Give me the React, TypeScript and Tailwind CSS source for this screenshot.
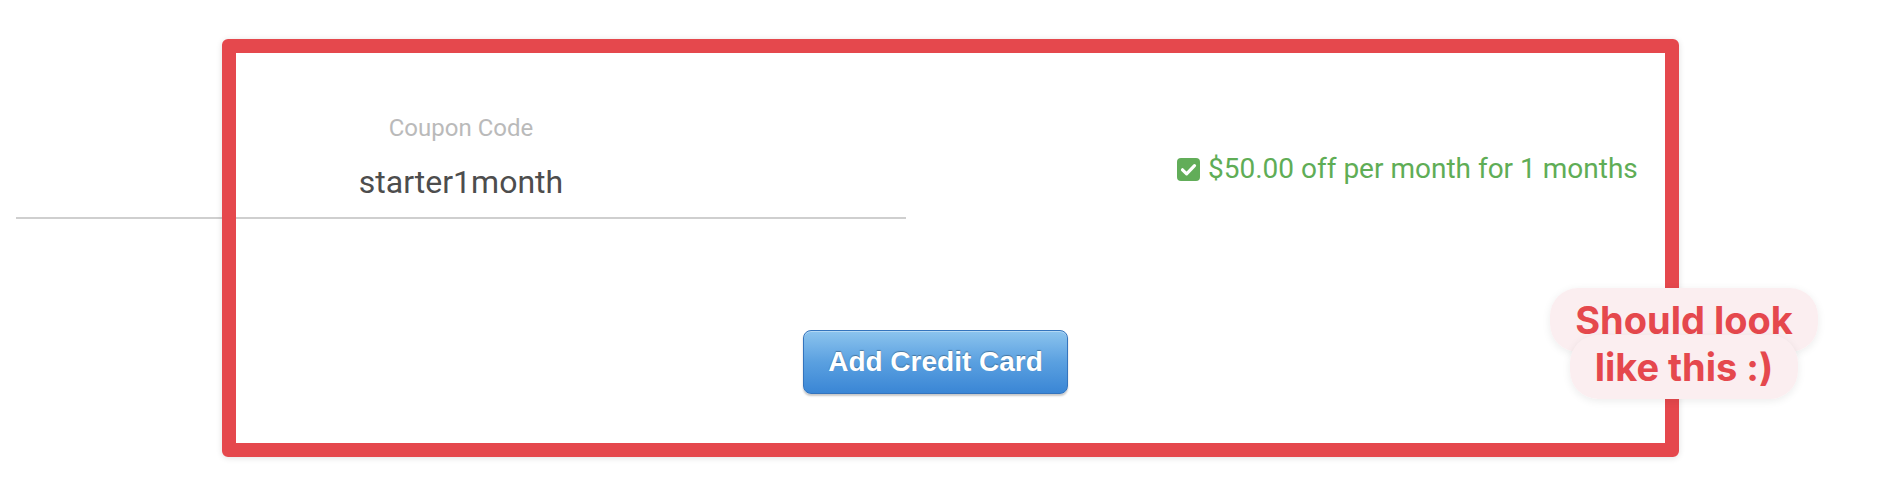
import React from 'react';

const CheckSquare: React.FC = () => (
  <svg width="23" height="23" viewBox="0 0 23 23" className="shrink-0">
    <rect x="0" y="0" width="23" height="23" rx="4" fill="#62ad59" />
    <path d="M5.5 11.8 L9.6 15.8 L17.5 7.6" fill="none" stroke="#fff" strokeWidth="3.2" strokeLinecap="round" strokeLinejoin="round" />
  </svg>
);

export default function App() {
  return (
    <div className="relative w-[1880px] h-[496px] overflow-hidden bg-white font-['Roboto',sans-serif]">
      {/* coupon row */}
      <div className="flex items-start pt-[114px]">
        <div className="ml-[16px] w-[890px] border-b-2 border-[#cfcfcf] pb-[15px] text-center">
          <div className="text-[24px] leading-[28px] text-[#bababa]">Coupon Code</div>
          <div className="mt-[20px] text-[32px] leading-[40px] text-[#4d4d4d]">starter1month</div>
        </div>
        <div className="ml-[271px] mt-[39px] flex items-center gap-[8px] text-[28px] leading-[32px] text-[#5fad56]">
          <CheckSquare />
          <span>$50.00 off per month for 1 months</span>
        </div>
      </div>

      {/* action */}
      <div className="mt-[111px] flex">
        <button className="ml-[803px] h-[64px] w-[265px] rounded-[8px] border border-[#3474bd] bg-gradient-to-b from-[#8cc4ee] via-[#5aa0e0] to-[#3a86d5] font-['Liberation_Sans',Arial,sans-serif] text-[28px] font-bold text-white shadow-[inset_0_1px_0_rgba(255,255,255,0.35),0_2px_2px_rgba(0,0,0,0.22)] [text-shadow:0_-1px_1px_rgba(0,0,0,0.3)]">
          Add Credit Card
        </button>
      </div>

      {/* annotation frame */}
      <div className="pointer-events-none absolute left-[222px] top-[39px] h-[418px] w-[1457px] rounded-[6px] border-[14px] border-[#e5484d] shadow-[0_1px_6px_rgba(0,0,0,0.12)]" />

      {/* annotation bubble */}
      <div className="pointer-events-none absolute left-[1544px] top-[297px] w-[280px] text-center font-['Inter',sans-serif] text-[38px] font-bold leading-[47px] text-[#e5484d]">
        <span className="box-decoration-clone rounded-[28px] bg-[#fbeef0] px-[25px] py-[9px] shadow-[0_2px_8px_rgba(0,0,0,0.08)]">
          Should look
          <br />
          like this :)
        </span>
      </div>
    </div>
  );
}
